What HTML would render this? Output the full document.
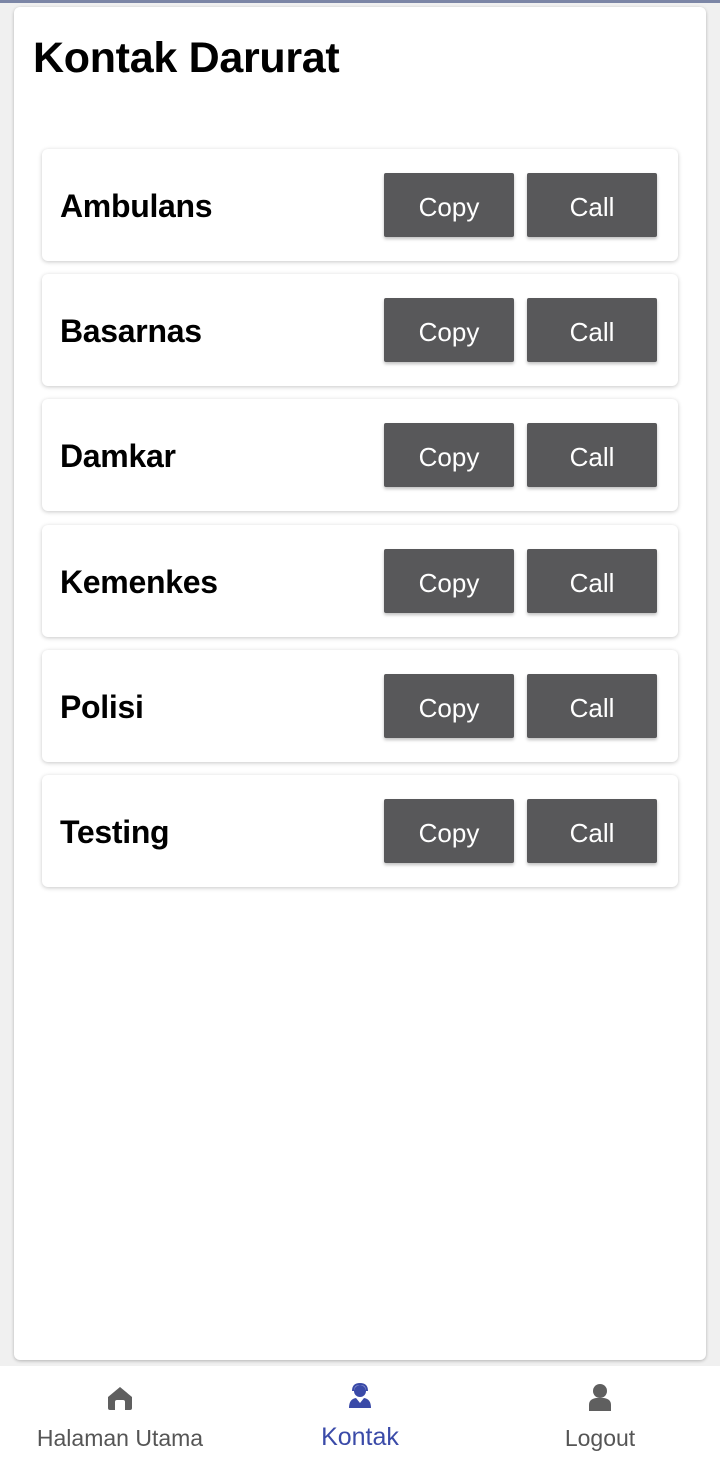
<!DOCTYPE html>
<html><head><meta charset="utf-8"><style>
body{margin:0;width:720px;height:1463px;background:#f0f0f0;font-family:"Liberation Sans",Roboto,sans-serif;position:relative;overflow:hidden}
.top{position:absolute;left:0;top:0;width:720px;height:3px;background:#7c86a6}
.card{position:absolute;left:14px;top:7px;width:692px;height:1353px;background:#fff;border-radius:6px;box-shadow:0 1px 3px rgba(0,0,0,.25)}
h1{position:absolute;left:19px;top:27px;margin:0;font-size:43px;font-weight:bold;color:#000;letter-spacing:-0.3px}
.row{position:absolute;left:42px;width:636px;height:112px;background:#fff;border-radius:6px;box-shadow:0 1px 4px rgba(0,0,0,.22)}
.row span{position:absolute;left:18px;top:39px;font-size:32px;font-weight:bold;color:#000;letter-spacing:-0.3px}
.b{position:absolute;top:24px;width:130px;height:64px;background:#58585a;color:#fff;font-size:26px;line-height:68px;text-align:center;border-radius:2px;box-shadow:0 2px 3px rgba(0,0,0,.25)}
.nav{position:absolute;left:0;top:1366px;width:720px;height:97px;background:#fff}
.it{position:absolute;top:59px;font-size:23px;color:#555;transform:translateX(-50%);white-space:nowrap}
</style></head><body>
<div class="top"></div>
<div class="card"><h1>Kontak Darurat</h1></div>
<div class="row" style="top:149px"><span>Ambulans</span><div class="b" style="left:342px">Copy</div><div class="b" style="left:485px">Call</div></div>
<div class="row" style="top:274px"><span>Basarnas</span><div class="b" style="left:342px">Copy</div><div class="b" style="left:485px">Call</div></div>
<div class="row" style="top:399px"><span>Damkar</span><div class="b" style="left:342px">Copy</div><div class="b" style="left:485px">Call</div></div>
<div class="row" style="top:525px"><span>Kemenkes</span><div class="b" style="left:342px">Copy</div><div class="b" style="left:485px">Call</div></div>
<div class="row" style="top:650px"><span>Polisi</span><div class="b" style="left:342px">Copy</div><div class="b" style="left:485px">Call</div></div>
<div class="row" style="top:775px"><span>Testing</span><div class="b" style="left:342px">Copy</div><div class="b" style="left:485px">Call</div></div>
<div class="nav">
<svg style="position:absolute;left:107px;top:20px" width="26" height="24" viewBox="0 0 26 24"><path d="M13 1 L25 11 V22 Q25 24 23 24 H18 V16 Q18 14 16 14 H10 Q8 14 8 16 V24 H3 Q1 24 1 22 V11 Z" fill="#5f5f5f"/></svg>
<svg style="position:absolute;left:348px;top:17px" width="24" height="26" viewBox="0 0 24 26"><circle cx="12" cy="8" r="6" fill="#3a4aa8"/><path d="M5 8 Q5 1 12 1 Q19 1 19 8" stroke="#3a4aa8" stroke-width="2" fill="none"/><path d="M1 25 Q1 16 8 15 L12 20 L16 15 Q23 16 23 25 Z" fill="#3a4aa8"/></svg>
<svg style="position:absolute;left:588px;top:17px" width="24" height="28" viewBox="0 0 24 28"><circle cx="12" cy="8" r="7" fill="#5f5f5f"/><path d="M1 28 V22 Q1 16 8 15 H16 Q23 16 23 22 V28 Z" fill="#5f5f5f"/></svg>
<div class="it" style="left:120px">Halaman Utama</div>
<div class="it" style="left:360px;color:#3a4aa8;font-size:25px;top:57px">Kontak</div>
<div class="it" style="left:600px">Logout</div>
</div>
</body></html>
